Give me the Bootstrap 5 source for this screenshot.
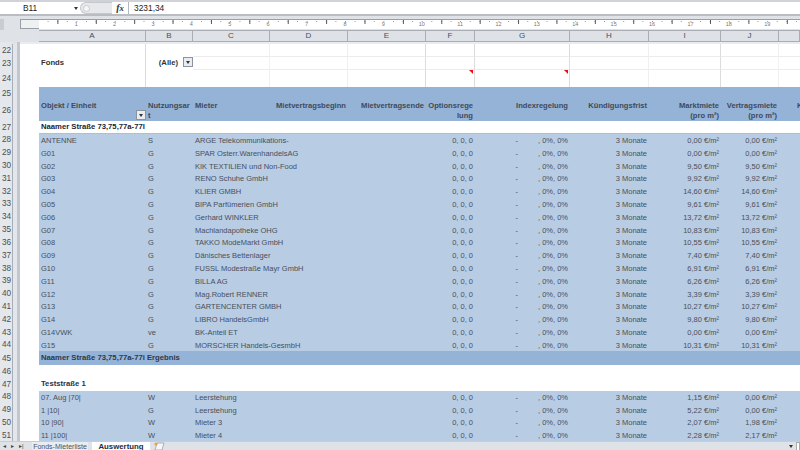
<!DOCTYPE html>
<html lang="de">
<head>
<meta charset="utf-8">
<title>Auswertung</title>
<link href="https://cdn.jsdelivr.net/npm/bootstrap@5.3.0/dist/css/bootstrap.min.css" rel="stylesheet">
<style>
html,body{margin:0;width:800px;height:450px;overflow:hidden;background:#dfe3e8}
body,.sheet{font-family:"Liberation Sans",Arial,sans-serif;font-size:7.5px;line-height:10px;color:#48505c}
.xl-app{width:800px;height:450px}
.fbar{height:16px;flex:none;background:#fff;border-top:2px solid #cfd2d6;border-bottom:2px solid #b9bcc0}
.namebox{width:74px;padding-left:23px;font-size:8.4px;color:#222}
.caret{width:0;height:0;border:2.5px solid transparent;border-top:3px solid #333;border-bottom:0}
.pill{width:32px;height:12px;margin-left:2px;border-radius:6px 0 0 6px;background:#e6e8eb;border:1px solid #c5c8cc;border-right:0}
.pill i{display:block;width:7px;height:7px;margin:2px 0 0 2px;border-radius:50%;background:#f6f7f8;border:1px solid #c9ccd0}
.fx{width:17px;font:italic 700 10px/12px "Liberation Serif",serif;color:#333;text-align:center;border-right:1px solid #b5b8bc;height:12px}
.fval{padding-left:5px;font-size:8.4px;color:#222}
.rulerbar{height:13.5px;flex:none;padding-top:3px;background:#dfe3e8}
.rblob{width:4px;height:12px;background:#c9cdd2;margin-right:16px}
.rbox{width:19px;height:10px;background:#eef0f2;border:1px solid #9a9fa6;border-right:0}
.ruler{width:761px;height:10px;padding-left:18px;overflow:hidden;background-color:#fff;border-top:1px solid #9a9fa6;
 background-image:linear-gradient(to right,#555 1px,transparent 1px),linear-gradient(to right,#999 1px,transparent 1px);
 background-size:38.4px 4px,9.6px 1px;background-repeat:repeat-x;background-position:-20px 0,-1px 1px;
 font-size:5.5px;line-height:9px;color:#777}
.ruler span{flex:0 0 38.4px;text-align:center}
.grid-wrap{flex:1 1 auto;min-height:0;overflow:hidden}
.sheet{width:800px;table-layout:fixed;border-collapse:separate;border-spacing:0}
.sheet td,.sheet th{padding:0 2px;white-space:nowrap;overflow:hidden;vertical-align:middle}
.sheet .rh{padding:1px 26px 0 0;text-align:center;font-weight:400;font-size:8.2px;color:#4a4f57;
 background:linear-gradient(to right,#e4e7eb 12px,#a9aeb6 12px 13px,#e3e6ea 13px 17px,#c3c7cd 17px 20px,#fff 20px);}
.sheet .rh span{display:block;width:13px}
.colhead th{height:11.5px;background:#dee2e7;border-right:1px solid #a9aeb6;border-top:1px solid #a9aeb6;border-bottom:1px solid #a9aeb6;text-align:center;font-weight:400;font-size:8px;color:#3d5068;padding:0}
.colhead th.cor{background:linear-gradient(to right,#dfe3e8 39px,#dee2e7 39px);border:0}
.strip td{height:2.5px;padding:0;background:#e8ebef;line-height:0;font-size:0}
.strip td.cor{background:linear-gradient(to right,#e4e7eb 12px,#dfe3e8 12px 17px,#c3c7cd 17px 20px,#e8ebef 20px)}
.h13{height:13px}.h125{height:12.5px}.h17{height:17px}.h14{height:14px}.h205{height:20.5px}.h1282{height:12.82px}.h126{height:12.6px}.h1275{height:12.75px}
.wht td{background:#fff;color:#333;font-size:7.7px}
.line-b{border-bottom:1px solid #ececec}
.line-r{border-right:1px solid #dcdcdc}
.line-f{border-right:1px solid #f0f0f0}
.sheet .data td{background:#b8cce4;padding-top:2px}
.hdr td{background:#95b3d7;color:#3f4a58;font-weight:700;vertical-align:top;font-size:7.6px}
.hdr td.kcut{padding:0 0 0 18px}
.hdr-top td{background:#95b3d7}
.sum td{background:#95b3d7;color:#2f3946;font-weight:700;font-size:7.7px}
.grp td{background:#fff;color:#1d2530;font-weight:700;font-size:7.7px;border-bottom:1px solid #a9bfdc}
.grp2 td{background:#fff;color:#1f3350;font-weight:700;font-size:7.7px}
.plain td{background:#fff}
.dash{margin-right:20px}
.alle{display:block;padding-right:13px}
.ddbtn{position:absolute;width:10px;height:10px;background:#e9edf2;border:1px solid #8b939e;display:flex;align-items:center;justify-content:center}
.dd-a{right:0;bottom:1px}
.dd-b{right:0;top:0}
.tri{position:absolute;top:0;right:1px;width:0;height:0;border-style:solid;border-width:0 4px 4px 0;border-color:transparent #e3101a transparent transparent}
.tabbar{height:9px;flex:none;background:#dfe3e8;font-size:7px;line-height:9px;color:#4a5460;border-top:1px solid #c9ccd2;overflow:hidden}
.tabnav{width:32px;padding-left:3px;gap:5px;color:#444;font-size:6px}
.tabi{width:56px;text-align:center;background:#e9ecf0}
.taba{width:58px;margin-left:4px;text-align:center;background:#fff;color:#1f2a38;font-weight:700;font-size:7.8px}
.newsheet{margin-left:2px}
.endbox{width:4px;height:9px;background:#fff;border:1px solid #aaa;margin-left:3px}
</style>
</head>
<body>
<div class="xl-app d-flex flex-column overflow-hidden">
  <div class="fbar d-flex align-items-center">
    <div class="namebox">B11</div>
    <div class="caret"></div>
    <div class="pill"><i></i></div>
    <div class="fx">f<small>x</small></div>
    <div class="fval">3231,34</div>
  </div>
  <div class="rulerbar d-flex">
    <div class="rblob"></div>
    <div class="rbox"></div>
    <div class="ruler d-flex"><span>1</span><span>2</span><span>3</span><span>4</span><span>5</span><span>6</span><span>7</span><span>8</span><span>9</span><span>10</span><span>11</span><span>12</span><span>13</span><span>14</span><span>15</span><span>16</span><span>17</span><span>18</span><span>19</span></div>
  </div>
  <div class="grid-wrap">
  <table class="sheet">
    <colgroup><col style="width:39px"><col style="width:107px"><col style="width:47px"><col style="width:77px"><col style="width:78px"><col style="width:78px"><col style="width:49px"><col style="width:95px"><col style="width:79px"><col style="width:72px"><col style="width:58px"><col style="width:21px"></colgroup>
    <thead>
      <tr class="colhead"><th class="cor"></th><th>A</th><th>B</th><th>C</th><th>D</th><th>E</th><th>F</th><th>G</th><th>H</th><th>I</th><th>J</th><th></th></tr>
      <tr class="strip"><td class="cor"></td><td colspan="11"></td></tr>
    </thead>
    <tbody>
      <tr class="wht h13"><th class="rh"><span>22</span></th><td class="line-r"></td><td></td><td class="line-b line-f"></td><td class="line-b line-f"></td><td class="line-b line-r"></td><td class="line-b line-r"></td><td class="line-b line-r"></td><td class="line-b line-f"></td><td class="line-b line-r"></td><td class="line-b line-f"></td><td class="line-b"></td></tr>
      <tr class="wht h125"><th class="rh"><span>23</span></th><td class="line-r fw-bold">Fonds</td><td class="position-relative text-end fw-bold"><span class="alle">(Alle)</span><span class="ddbtn dd-b"><span class="caret"></span></span></td><td class="line-b line-f"></td><td class="line-b line-f"></td><td class="line-b line-r"></td><td class="line-b line-r"></td><td class="line-b line-r"></td><td class="line-b line-f"></td><td class="line-b line-r"></td><td class="line-b line-f"></td><td class="line-b"></td></tr>
      <tr class="wht h17"><th class="rh"><span>24</span></th><td class="line-r"></td><td></td><td class="line-f"></td><td class="line-f"></td><td class="line-r"></td><td class="line-r position-relative"><span class="tri"></span></td><td class="line-r position-relative"><span class="tri"></span></td><td class="line-f"></td><td class="line-r"></td><td class="line-f"></td><td></td></tr>
      <tr class="hdr-top h14"><th class="rh"><span>25</span></th><td colspan="11"></td></tr>
      <tr class="hdr h205"><th class="rh"><span>26</span></th><td class="position-relative">Objekt / Einheit<span class="ddbtn dd-a"><span class="caret"></span></span></td><td>Nutzungsar<br>t</td><td>Mieter</td><td class="text-end">Mietvertragsbeginn</td><td class="text-end">Mietvertragsende</td><td class="text-end">Optionsrege<br>lung</td><td class="text-end">Indexregelung</td><td class="text-end">Kündigungsfrist</td><td class="text-end">Marktmiete<br>(pro m²)</td><td class="text-end">Vertragsmiete<br>(pro m²)</td><td class="kcut">K</td></tr>
      <tr class="grp h125"><th class="rh"><span>27</span></th><td colspan="11">Naamer Straße 73,75,77a-77l</td></tr>
      <tr class="data h1282"><th class="rh"><span>28</span></th><td>ANTENNE</td><td>S</td><td colspan="3">ARGE Telekommunikations-</td><td class="text-end">0, 0, 0</td><td class="text-end"><span class="dash">-</span>, 0%, 0%</td><td class="text-end">3 Monate</td><td class="text-end">0,00 €/m²</td><td class="text-end">0,00 €/m²</td><td></td></tr>
      <tr class="data h1282"><th class="rh"><span>29</span></th><td>G01</td><td>G</td><td colspan="3">SPAR Osterr.WarenhandelsAG</td><td class="text-end">0, 0, 0</td><td class="text-end"><span class="dash">-</span>, 0%, 0%</td><td class="text-end">3 Monate</td><td class="text-end">0,00 €/m²</td><td class="text-end">0,00 €/m²</td><td></td></tr>
      <tr class="data h1282"><th class="rh"><span>30</span></th><td>G02</td><td>G</td><td colspan="3">KIK TEXTILIEN und Non-Food</td><td class="text-end">0, 0, 0</td><td class="text-end"><span class="dash">-</span>, 0%, 0%</td><td class="text-end">3 Monate</td><td class="text-end">9,50 €/m²</td><td class="text-end">9,50 €/m²</td><td></td></tr>
      <tr class="data h1282"><th class="rh"><span>31</span></th><td>G03</td><td>G</td><td colspan="3">RENO Schuhe GmbH</td><td class="text-end">0, 0, 0</td><td class="text-end"><span class="dash">-</span>, 0%, 0%</td><td class="text-end">3 Monate</td><td class="text-end">9,92 €/m²</td><td class="text-end">9,92 €/m²</td><td></td></tr>
      <tr class="data h1282"><th class="rh"><span>32</span></th><td>G04</td><td>G</td><td colspan="3">KLIER GMBH</td><td class="text-end">0, 0, 0</td><td class="text-end"><span class="dash">-</span>, 0%, 0%</td><td class="text-end">3 Monate</td><td class="text-end">14,60 €/m²</td><td class="text-end">14,60 €/m²</td><td></td></tr>
      <tr class="data h1282"><th class="rh"><span>33</span></th><td>G05</td><td>G</td><td colspan="3">BIPA Parfümerien GmbH</td><td class="text-end">0, 0, 0</td><td class="text-end"><span class="dash">-</span>, 0%, 0%</td><td class="text-end">3 Monate</td><td class="text-end">9,61 €/m²</td><td class="text-end">9,61 €/m²</td><td></td></tr>
      <tr class="data h1282"><th class="rh"><span>34</span></th><td>G06</td><td>G</td><td colspan="3">Gerhard WINKLER</td><td class="text-end">0, 0, 0</td><td class="text-end"><span class="dash">-</span>, 0%, 0%</td><td class="text-end">3 Monate</td><td class="text-end">13,72 €/m²</td><td class="text-end">13,72 €/m²</td><td></td></tr>
      <tr class="data h1282"><th class="rh"><span>35</span></th><td>G07</td><td>G</td><td colspan="3">Machlandapotheke OHG</td><td class="text-end">0, 0, 0</td><td class="text-end"><span class="dash">-</span>, 0%, 0%</td><td class="text-end">3 Monate</td><td class="text-end">10,83 €/m²</td><td class="text-end">10,83 €/m²</td><td></td></tr>
      <tr class="data h1282"><th class="rh"><span>36</span></th><td>G08</td><td>G</td><td colspan="3">TAKKO ModeMarkt GmbH</td><td class="text-end">0, 0, 0</td><td class="text-end"><span class="dash">-</span>, 0%, 0%</td><td class="text-end">3 Monate</td><td class="text-end">10,55 €/m²</td><td class="text-end">10,55 €/m²</td><td></td></tr>
      <tr class="data h1282"><th class="rh"><span>37</span></th><td>G09</td><td>G</td><td colspan="3">Dänisches Bettenlager</td><td class="text-end">0, 0, 0</td><td class="text-end"><span class="dash">-</span>, 0%, 0%</td><td class="text-end">3 Monate</td><td class="text-end">7,40 €/m²</td><td class="text-end">7,40 €/m²</td><td></td></tr>
      <tr class="data h1282"><th class="rh"><span>38</span></th><td>G10</td><td>G</td><td colspan="3">FUSSL Modestraße Mayr GmbH</td><td class="text-end">0, 0, 0</td><td class="text-end"><span class="dash">-</span>, 0%, 0%</td><td class="text-end">3 Monate</td><td class="text-end">6,91 €/m²</td><td class="text-end">6,91 €/m²</td><td></td></tr>
      <tr class="data h1282"><th class="rh"><span>39</span></th><td>G11</td><td>G</td><td colspan="3">BILLA AG</td><td class="text-end">0, 0, 0</td><td class="text-end"><span class="dash">-</span>, 0%, 0%</td><td class="text-end">3 Monate</td><td class="text-end">6,26 €/m²</td><td class="text-end">6,26 €/m²</td><td></td></tr>
      <tr class="data h1282"><th class="rh"><span>40</span></th><td>G12</td><td>G</td><td colspan="3">Mag.Robert RENNER</td><td class="text-end">0, 0, 0</td><td class="text-end"><span class="dash">-</span>, 0%, 0%</td><td class="text-end">3 Monate</td><td class="text-end">3,39 €/m²</td><td class="text-end">3,39 €/m²</td><td></td></tr>
      <tr class="data h1282"><th class="rh"><span>41</span></th><td>G13</td><td>G</td><td colspan="3">GARTENCENTER GMBH</td><td class="text-end">0, 0, 0</td><td class="text-end"><span class="dash">-</span>, 0%, 0%</td><td class="text-end">3 Monate</td><td class="text-end">10,27 €/m²</td><td class="text-end">10,27 €/m²</td><td></td></tr>
      <tr class="data h1282"><th class="rh"><span>42</span></th><td>G14</td><td>G</td><td colspan="3">LIBRO HandelsGmbH</td><td class="text-end">0, 0, 0</td><td class="text-end"><span class="dash">-</span>, 0%, 0%</td><td class="text-end">3 Monate</td><td class="text-end">9,80 €/m²</td><td class="text-end">9,80 €/m²</td><td></td></tr>
      <tr class="data h1282"><th class="rh"><span>43</span></th><td>G14VWK</td><td>ve</td><td colspan="3">BK-Anteil ET</td><td class="text-end">0, 0, 0</td><td class="text-end"><span class="dash">-</span>, 0%, 0%</td><td class="text-end">3 Monate</td><td class="text-end">0,00 €/m²</td><td class="text-end">0,00 €/m²</td><td></td></tr>
      <tr class="data h1282"><th class="rh"><span>44</span></th><td>G15</td><td>G</td><td colspan="3">MORSCHER Handels-GesmbH</td><td class="text-end">0, 0, 0</td><td class="text-end"><span class="dash">-</span>, 0%, 0%</td><td class="text-end">3 Monate</td><td class="text-end">10,31 €/m²</td><td class="text-end">10,31 €/m²</td><td></td></tr>
      <tr class="sum h14"><th class="rh"><span>45</span></th><td colspan="11">Naamer Straße 73,75,77a-77i Ergebnis</td></tr>
      <tr class="plain h126"><th class="rh"><span>46</span></th><td colspan="11"></td></tr>
      <tr class="grp2 h126"><th class="rh"><span>47</span></th><td colspan="11">Teststraße 1</td></tr>
      <tr class="data h1275"><th class="rh"><span>48</span></th><td>07. Aug |70|</td><td>W</td><td colspan="3">Leerstehung</td><td class="text-end">0, 0, 0</td><td class="text-end"><span class="dash">-</span>, 0%, 0%</td><td class="text-end">3 Monate</td><td class="text-end">1,15 €/m²</td><td class="text-end">0,00 €/m²</td><td></td></tr>
      <tr class="data h1275"><th class="rh"><span>49</span></th><td>1 |10|</td><td>G</td><td colspan="3">Leerstehung</td><td class="text-end">0, 0, 0</td><td class="text-end"><span class="dash">-</span>, 0%, 0%</td><td class="text-end">3 Monate</td><td class="text-end">5,22 €/m²</td><td class="text-end">0,00 €/m²</td><td></td></tr>
      <tr class="data h1275"><th class="rh"><span>50</span></th><td>10 |90|</td><td>W</td><td colspan="3">Mieter 3</td><td class="text-end">0, 0, 0</td><td class="text-end"><span class="dash">-</span>, 0%, 0%</td><td class="text-end">3 Monate</td><td class="text-end">2,07 €/m²</td><td class="text-end">1,98 €/m²</td><td></td></tr>
      <tr class="data h1275"><th class="rh"><span>51</span></th><td>11 |100|</td><td>W</td><td colspan="3">Mieter 4</td><td class="text-end">0, 0, 0</td><td class="text-end"><span class="dash">-</span>, 0%, 0%</td><td class="text-end">3 Monate</td><td class="text-end">2,28 €/m²</td><td class="text-end">2,17 €/m²</td><td></td></tr>
    </tbody>
  </table>
  </div>
  <div class="tabbar d-flex text-nowrap">
    <div class="tabnav d-flex"><span>◂</span><span>▸</span><span>▸|</span></div>
    <div class="tabi">Fonds-Mieterliste</div>
    <div class="taba">Auswertung</div>
    <svg class="newsheet" width="14" height="9" viewBox="0 0 14 9"><path d="M3 8 5 1h7l-2 7z" fill="#f4f6f9" stroke="#8fa3bd" stroke-width=".8"/><circle cx="4" cy="2" r="1.6" fill="#e8a33a"/></svg>
    <div class="ms-auto d-flex align-items-center"><span class="caret"></span><span class="endbox"></span></div>
  </div>
</div>
<script src="https://cdn.jsdelivr.net/npm/bootstrap@5.3.0/dist/js/bootstrap.bundle.min.js"></script>
</body>
</html>
